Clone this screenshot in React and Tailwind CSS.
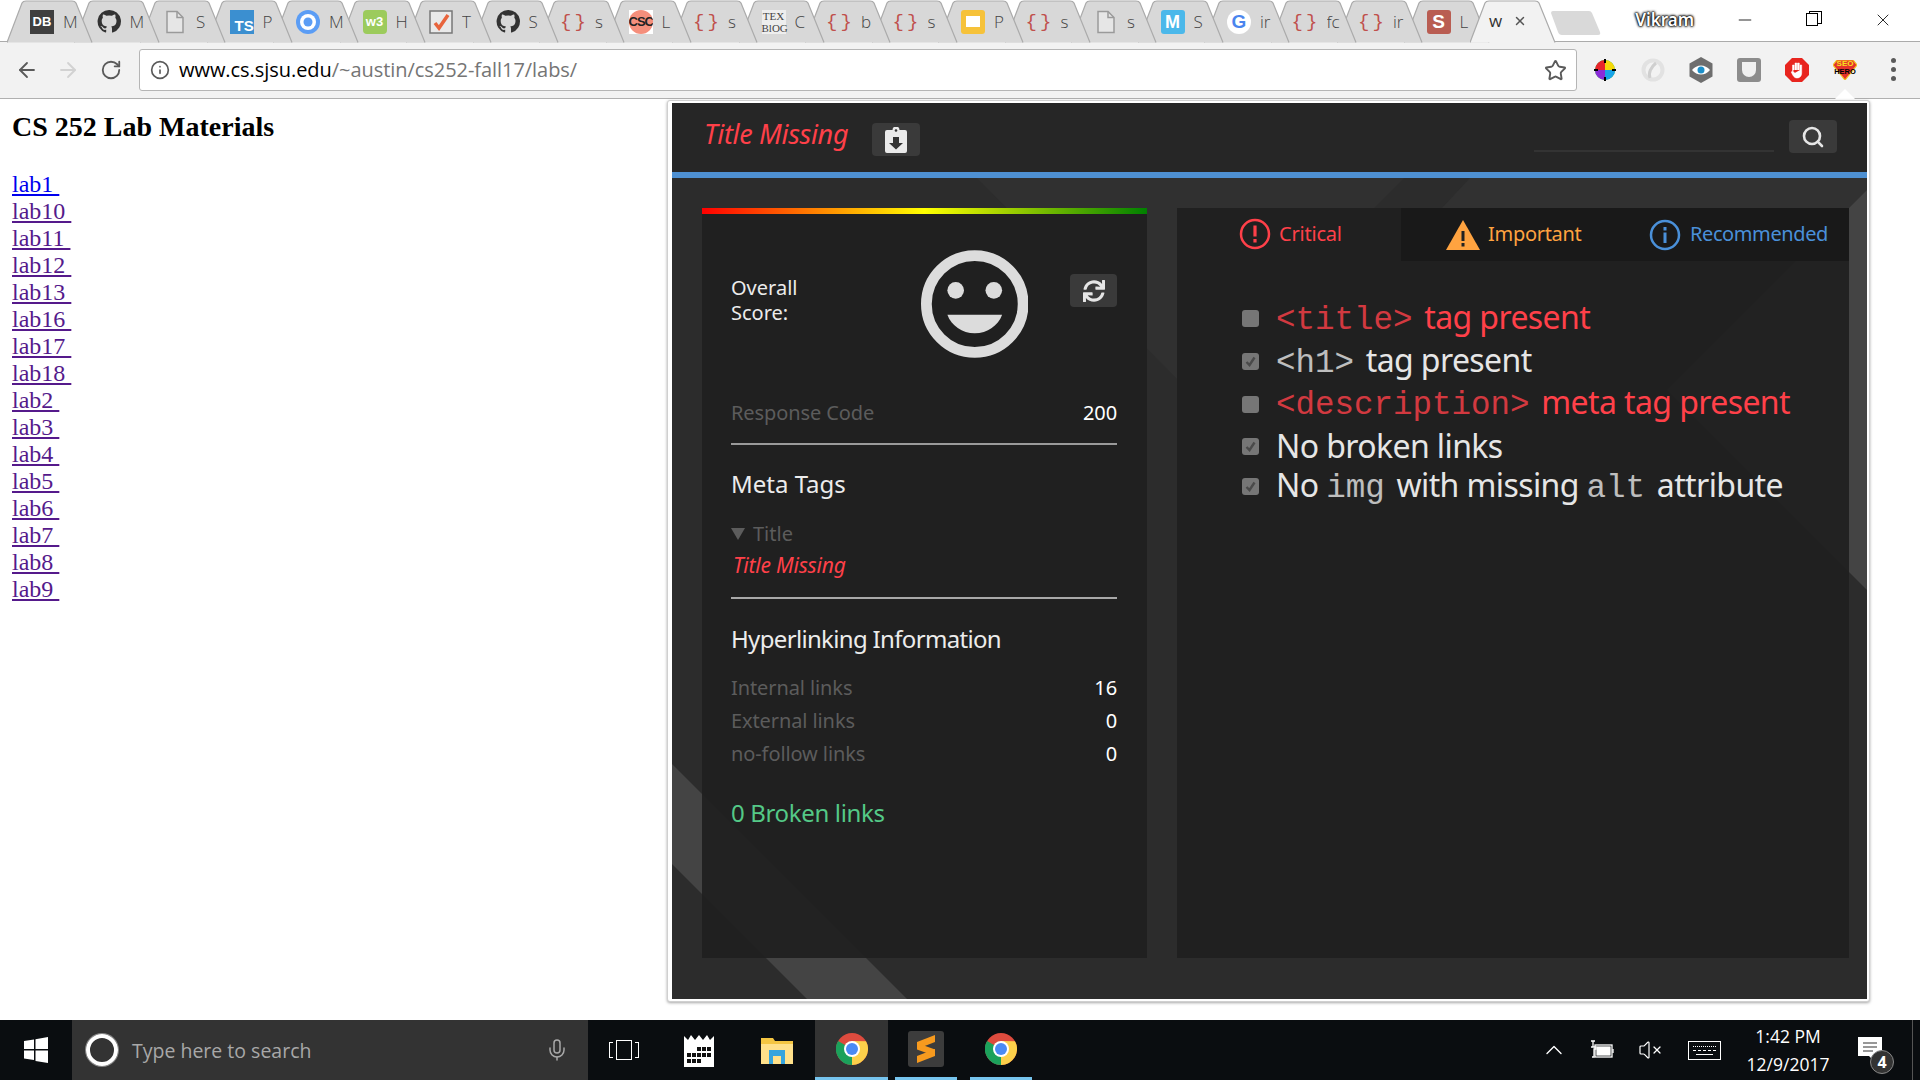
import React from "react";
import { ArrowLeft, ArrowRight, RotateCw, Info, Star, X, Minus, Search, ChevronUp, Mic, VolumeX } from "lucide-react";
import { FaSync } from "react-icons/fa";

const TABS = [
  ["db", "M"], ["gh", "M"], ["doc", "S"], ["ts", "P"], ["ring", "M"], ["w3", "H"], ["check", "T"], ["gh", "S"],
  ["br", "s"], ["csc", "L"], ["br", "s"], ["tex", "C"], ["br", "b"], ["br", "s"], ["slides", "P"], ["br", "s"],
  ["doc", "s"], ["m", "S"], ["g", "ir"], ["br", "fc"], ["br", "ir"], ["s", "L"],
];

function GitHub() {
  return (
    <svg width="25" height="25" viewBox="0 0 24 24" fill="#333">
      <path d="M12 .5A11.5 11.5 0 0 0 8.4 22.9c.6.1.8-.2.8-.6v-2c-3.2.7-3.9-1.5-3.9-1.5-.5-1.3-1.3-1.7-1.3-1.7-1-.7.1-.7.1-.7 1.2.1 1.8 1.200 1.800 1.200 1 1.800 2.700 1.300 3.400 1 .1-.8.400-1.300.700-1.600-2.600-.3-5.300-1.300-5.300-5.700 0-1.300.5-2.300 1.200-3.100-.1-.3-.5-1.500.1-3.100 0 0 1-.3 3.200 1.200a11 11 0 0 1 5.800 0c2.200-1.500 3.200-1.200 3.200-1.200.6 1.600.2 2.800.1 3.100.8.8 1.200 1.900 1.200 3.100 0 4.400-2.700 5.400-5.300 5.700.4.4.8 1.100.8 2.200v3.200c0 .3.200.7.800.6A11.500 11.500 0 0 0 12 .5Z" />
    </svg>
  );
}

function Favicon({ kind }) {
  if (kind === "db")
    return <div className="w-6 h-6 bg-[#3f3f3f] text-white text-[13px] leading-6 font-bold text-center font-['Liberation_Sans',sans-serif]">DB</div>;
  if (kind === "gh") return <GitHub />;
  if (kind === "doc")
    return (
      <svg width="24" height="24" viewBox="0 0 24 24" fill="none" stroke="#9a9a9a" strokeWidth="1.5">
        <path d="M4 1.500h10l6 6V22.500H4Z" fill="#e6e6e6" />
        <path d="M14 1.500v6h6" />
      </svg>
    );
  if (kind === "ts")
    return <div className="w-6 h-6 bg-[#3b8fd0] text-white text-[15px] leading-[17px] font-bold pt-[7px] pl-[5px] font-['Liberation_Sans',sans-serif]">TS</div>;
  if (kind === "ring")
    return (
      <svg width="24" height="24" viewBox="0 0 24 24">
        <circle cx="12" cy="12" r="12" fill="#5b9df5" />
        <circle cx="12" cy="12" r="8" fill="#fff" />
        <circle cx="12" cy="12" r="4.500" fill="#5b9df5" />
      </svg>
    );
  if (kind === "w3")
    return <div className="w-6 h-6 rounded-sm bg-[#9ccb5c] text-white text-[13px] leading-6 font-bold text-center font-['Liberation_Sans',sans-serif]">w3</div>;
  if (kind === "check")
    return (
      <svg width="24" height="24" viewBox="0 0 24 24" fill="none">
        <rect x="1" y="1" width="22" height="22" fill="#e9e9e9" stroke="#777" strokeWidth="1.500" />
        <path d="M6 13l4 5 9-13" stroke="#e8643c" strokeWidth="3.500" />
      </svg>
    );
  if (kind === "br")
    return <div className="w-7 text-[#c0504d] text-[19px] leading-6 text-center tracking-[3px] font-['Liberation_Mono',monospace]">{"{}"}</div>;
  if (kind === "csc")
    return (
      <div className="w-6 h-6 bg-white flex items-center justify-center">
        <div className="w-6 h-6 rounded-full bg-[#f58f7c] text-[#222] text-[13px] leading-6 font-bold text-center overflow-hidden tracking-[-1px] font-['Liberation_Sans',sans-serif]">CSC</div>
      </div>
    );
  if (kind === "tex")
    return <div className="w-6 h-6 text-[#444] bg-[#eee] text-[11px] leading-[12px] text-center font-['Liberation_Serif',serif]">TEX<br />BlOG</div>;
  if (kind === "slides")
    return (
      <div className="w-6 h-6 rounded-[3px] bg-[#f6c23a] flex items-center justify-center">
        <div className="w-[14px] h-[11px] bg-white" />
      </div>
    );
  if (kind === "m")
    return <div className="w-6 h-6 rounded-[3px] bg-[#4bb8ea] text-white text-[18px] leading-6 font-bold text-center font-['Liberation_Sans',sans-serif]">M</div>;
  if (kind === "g")
    return <div className="w-6 h-6 rounded-full bg-white text-[#4a85ee] text-[19px] leading-6 font-bold text-center font-['Liberation_Sans',sans-serif]">G</div>;
  if (kind === "s")
    return <div className="w-6 h-6 rounded-[3px] bg-[#b95d52] text-white text-[19px] leading-6 font-bold text-center font-['Liberation_Sans',sans-serif]">S</div>;
  return null;
}

function TabShape({ fill, stroke }) {
  return (
    <svg className="absolute left-0 top-0" width="86" height="43" viewBox="0 0 86 43">
      <path d="M0 42.500 L15 3 Q16 1 19 1 L65 1 Q68 1 69 3 L85 42.500 Z" fill={fill} />
      <path d="M0 42.500 L15 3 Q16 1 19 1 L65 1 Q68 1 69 3 L85 42.500" fill="none" stroke={stroke} strokeWidth="1.200" />
    </svg>
  );
}

function TabStrip() {
  return (
    <div className="h-[42px] flex bg-white border-b border-[#ababab] relative font-['Open_Sans',sans-serif]">
      <div className="flex pl-[7px]">
        {TABS.map(([kind, label], i) => (
          <div key={i} className="relative w-[66.5px] h-[42px] shrink-0" style={{ zIndex: 40 - i }}>
            <TabShape fill="#d8d8d8" stroke="#ababab" />
            <div className="relative h-[42px] w-[70px] pl-[23px] pt-[1px] flex items-center gap-[9px] overflow-hidden">
              <div className="shrink-0 w-6 flex justify-center"><Favicon kind={kind} /></div>
              <span className="w-[14px] shrink-0 overflow-hidden text-[17px] text-[#444] font-light">{label}</span>
            </div>
          </div>
        ))}
        <div className="relative w-[86px] h-[43px] shrink-0 z-50">
          <TabShape fill="#f2f2f2" stroke="#ababab" />
          <div className="relative h-[42px] pl-[19px] flex items-center gap-[11px]">
            <span className="text-[17px] text-[#333]">w</span>
            <X size={14} strokeWidth={2.500} className="text-[#555]" />
          </div>
        </div>
        <svg width="52" height="26" viewBox="0 0 52 26" className="-ml-[6px] mt-[10px] shrink-0">
          <path d="M1 3 Q1 1 3 1 H39 Q41 1 42 3 L50 22 Q51 25 48 25 H12 Q9 25 8 22 Z" fill="#d9d9d9" />
        </svg>
      </div>
      <div className="ml-auto flex items-center h-[42px] pr-[3px]">
        <span className="text-[17px] font-semibold text-white mr-[16px] mt-[-3px] font-['Noto_Sans',sans-serif] [text-shadow:0_0_1px_#000,0_0_2px_#000,0_0_3px_#000,0_0_3px_#000]">Vikram</span>
        <div className="w-[69px] flex justify-center mt-[-2px]"><Minus size={20} strokeWidth={1} className="text-black" /></div>
        <div className="w-[69px] flex justify-center mt-[-2px]">
          <div className="relative w-[15px] h-[15px]">
            <div className="absolute left-[3px] -top-[2px] w-[13px] h-[13px] border border-black" />
            <div className="absolute left-0 top-0 w-[12px] h-[13px] border border-black bg-white" />
          </div>
        </div>
        <div className="w-[69px] flex justify-center mt-[-2px]"><X size={20} strokeWidth={1} className="text-black" /></div>
      </div>
    </div>
  );
}

function Ext({ children }) {
  return <div className="w-[48px] h-[48px] flex items-center justify-center">{children}</div>;
}

function Toolbar() {
  return (
    <div className="h-[57px] bg-[#f2f2f2] border-b border-[#b0b0b0] flex items-center relative">
      <div className="w-[48px] pl-[6px] flex justify-center"><ArrowLeft size={24} strokeWidth={1.800} className="text-[#5a5a5a]" /></div>
      <div className="w-[40px] flex justify-center"><ArrowRight size={24} strokeWidth={1.800} className="text-[#d2d2d2]" /></div>
      <div className="w-[46px] flex justify-center"><RotateCw size={22} strokeWidth={2} className="text-[#5a5a5a]" /></div>
      <div className="ml-[5px] w-[1438px] h-[42px] bg-white rounded-[3px] border border-[#b5b5b5] flex items-center pl-[10px] pr-[9px]">
        <Info size={20} strokeWidth={2} className="text-[#5a5a5a] shrink-0" />
        <span className="ml-[9px] text-[20px] text-black font-['Open_Sans',sans-serif] tracking-[-0.05px]">www.cs.sjsu.edu<span className="text-[#757575]">/~austin/cs252-fall17/labs/</span></span>
        <Star size={23} strokeWidth={2} className="ml-auto text-[#5a5a5a]" />
      </div>
      <div className="ml-[4px] flex -mt-[1px]">
        <Ext>
          <svg width="22" height="22" viewBox="0 0 22 22">
            <circle cx="11" cy="11" r="10" fill="#1fb141" />
            <path d="M11 11V1a10 10 0 0 1 10 10Z" fill="#f5d90a" />
            <path d="M11 11h10a10 10 0 0 1-10 10Z" fill="#18a4e8" />
            <path d="M11 11v10a10 10 0 0 1-10-10Z" fill="#8b2bd8" />
            <path d="M11 11H1a10 10 0 0 1 10-10Z" fill="#e8252b" />
            <path d="M11 0v4M11 18v4M0 11h4M18 11h4" stroke="#000" strokeWidth="2" />
          </svg>
        </Ext>
        <Ext>
          <svg width="24" height="24" viewBox="0 0 24 24" fill="none">
            <circle cx="12" cy="12" r="9.500" stroke="#e2e2e2" strokeWidth="4" />
            <path d="M9 20c-2-5 1-11 6-15" stroke="#cfcfcf" strokeWidth="3" />
          </svg>
        </Ext>
        <Ext>
          <svg width="26" height="26" viewBox="0 0 26 26">
            <path d="M13 0l11.500 6.500v13L13 26 1.500 19.500v-13Z" fill="#6e6e6e" />
            <path d="M4 13c5-6 13-6 18 0-5 6-13 6-18 0Z" fill="#fff" />
            <circle cx="13" cy="13" r="3.500" fill="#1d8fc9" />
          </svg>
        </Ext>
        <Ext>
          <div className="w-6 h-6 rounded-[3px] bg-[#8c8c8c] flex items-center justify-center">
            <div className="w-[14px] h-[15px] bg-[#f0f0f0] rounded-b-full rounded-t-[4px]" />
          </div>
        </Ext>
        <Ext>
          <svg width="24" height="24" viewBox="0 0 24 24">
            <path d="M7 0h10l7 7v10l-7 7H7l-7-7V7Z" fill="#e8251f" />
            <path d="M7.500 13V7h1.700v5M10 12V5h1.800v7M12.500 12V5h1.800v7M15 12V7h1.700v8c0 3-2 5-4.500 5-3 0-4-2-6-6l1.500-1 2 2" fill="#fff" stroke="#fff" strokeWidth=".5" />
          </svg>
        </Ext>
        <Ext>
          <div className="relative w-[24px] h-[20px]">
            <svg width="24" height="20" viewBox="0 0 24 20" className="absolute left-0 top-0">
              <path d="M4 0h16l4 5-12 15L0 5Z" fill="#e4322b" stroke="#f6c21c" strokeWidth="1.200" />
            </svg>
            <div className="absolute left-0 right-0 top-0 text-center text-[8px] leading-[8px] font-bold text-[#f6e21c] font-['Liberation_Sans',sans-serif]">SEO</div>
            <div className="absolute left-0 right-0 top-[8px] text-center text-[7.5px] leading-[8px] font-bold text-black font-['Liberation_Sans',sans-serif]">HERO</div>
          </div>
        </Ext>
        <Ext>
          <div className="flex flex-col gap-[4px]">
            <div className="w-[5px] h-[5px] rounded-full bg-[#5a5a5a]" />
            <div className="w-[5px] h-[5px] rounded-full bg-[#5a5a5a]" />
            <div className="w-[5px] h-[5px] rounded-full bg-[#5a5a5a]" />
          </div>
        </Ext>
      </div>
      <svg width="20" height="10" viewBox="0 0 20 10" className="absolute left-[1835px] top-[47px]">
        <path d="M0 10L10 0l10 10Z" fill="#fff" />
      </svg>
    </div>
  );
}

const LINKS = ["lab1", "lab10", "lab11", "lab12", "lab13", "lab16", "lab17", "lab18", "lab2", "lab3", "lab4", "lab5", "lab6", "lab7", "lab8", "lab9"];

function PageContent() {
  return (
    <div className="pl-[12px] pt-[13px] font-['Liberation_Serif',serif] text-black">
      <h2 className="text-[28px] leading-[30px] font-bold">CS 252 Lab Materials</h2>
      <ul className="mt-[29px]">
        {LINKS.map((l, i) => (
          <li key={l} className="h-[27px] leading-[27px] text-[24px]">
            <a className={i === 0 ? "underline whitespace-pre text-[#0000ee]" : "underline whitespace-pre text-[#551a8b]"}>{l + " "}</a>
          </li>
        ))}
      </ul>
    </div>
  );
}

function Row({ label, value, cls }) {
  return (
    <div className={"flex justify-between items-center text-[20px] tracking-[-0.1px] " + (cls || "h-[33px]")}>
      <span className="text-[#5c5c5c]">{label}</span>
      <span className="text-white">{value}</span>
    </div>
  );
}

function Smiley() {
  return (
    <svg width="110" height="110" viewBox="0 0 110 110">
      <circle cx="55" cy="55" r="49.500" fill="none" stroke="#dcdcdc" strokeWidth="11" />
      <circle cx="35.500" cy="41" r="8.500" fill="#dcdcdc" />
      <circle cx="74.500" cy="41" r="8.500" fill="#dcdcdc" />
      <path d="M27 66h56c-4 11-15 19-28 19S31 77 27 66Z" fill="#dcdcdc" />
    </svg>
  );
}

function LeftCard() {
  return (
    <div className="w-[445px] h-[750px] bg-[#1f1f1f]/90 relative text-[#e6e6e6]">
      <div className="h-[6px] bg-[linear-gradient(to_right,#ff0000,#ffff00_50%,#008000)]" />
      <div className="pl-[29px] pr-[30px]">
        <div className="flex items-start mt-[35px]">
          <div className="w-[194px] mt-[26px] text-[20px] leading-[25px] text-[#ececec]">Overall<br />Score:</div>
          <Smiley />
          <button className="ml-[42px] mt-[25px] w-[48px] h-[33px] rounded-[4px] bg-[#3a3a3a] flex items-center justify-center">
            <FaSync size={22} className="text-[#e6e6e6]" />
          </button>
        </div>
        <Row label="Response Code" value="200" cls="mt-[37px] h-[33px]" />
        <div className="mt-[14px] h-[2px] bg-[#9a9a9a]" />
        <div className="mt-[22px] text-[24px] leading-[34px] text-[#ececec]">Meta Tags</div>
        <div className="mt-[19px] h-[28px] flex items-center text-[20px] text-[#5c5c5c]">
          <svg width="14" height="12" viewBox="0 0 14 12" className="mr-[8px]"><path d="M0 0h14L7 12Z" fill="#5c5c5c" /></svg>
          Title
        </div>
        <div className="mt-[2px] ml-[2px] h-[30px] leading-[30px] italic text-[21px] tracking-[-0.2px] text-[#ff4049]">Title Missing</div>
        <div className="mt-[17px] h-[2px] bg-[#a8a8a8]" />
        <div className="mt-[23px] text-[24px] leading-[34px] tracking-[-0.67px] text-[#ececec]">Hyperlinking Information</div>
        <div className="mt-[15px]">
          <Row label="Internal links" value="16" />
          <Row label="External links" value="0" />
          <Row label="no-follow links" value="0" />
        </div>
        <div className="mt-[26px] text-[24px] leading-[34px] tracking-[-0.35px] text-[#54c987]">0 Broken links</div>
      </div>
    </div>
  );
}

function Check({ on }) {
  return (
    <span className="shrink-0 w-[17px] h-[17px] rounded-[3px] bg-[#767676] flex items-center justify-center mr-[17px]">
      {on ? (
        <svg width="13" height="13" viewBox="0 0 13 13" fill="none"><path d="M2.500 7l3 3 5-7.500" stroke="#4a4a4a" strokeWidth="2.400" /></svg>
      ) : null}
    </span>
  );
}

const Mono = ({ children }) => <span className="font-['Liberation_Mono',monospace] text-[32.5px] tracking-normal opacity-80 mr-[4px]">{children}</span>;

function Item({ on, red, children, cls }) {
  return (
    <li className={"flex items-center whitespace-pre text-[32px] leading-[38px] tracking-[-0.6px] " + (red ? "text-[#ff4049] " : "text-[#e6e6e6] ") + cls}>
      <Check on={on} />
      <span>{children}</span>
    </li>
  );
}

function RightCard() {
  return (
    <div className="w-[672px] h-[750px] bg-[#1f1f1f]/90">
      <div className="flex h-[53px] text-[20px]">
        <div className="w-[224px] flex items-center pl-[62px] gap-[8px] text-[#ff4049] tracking-[-0.2px] -mt-[1px]">
          <svg width="32" height="32" viewBox="0 0 32 32" fill="none" stroke="#ff4049" strokeWidth="2.500">
            <circle cx="16" cy="16" r="14" />
            <path d="M16 7.500v11M16 21v3.500" strokeWidth="3.200" />
          </svg>
          Critical
        </div>
        <div className="flex-1 bg-[#191919] flex items-center">
          <svg width="34" height="30" viewBox="0 0 34 30" className="ml-[45px]">
            <path d="M17 0l17 30H0Z" fill="#ffa340" />
            <path d="M15.500 11h3v10h-3ZM15.500 23h3v3.500h-3Z" fill="#222" />
          </svg>
          <span className="ml-[8px] w-[106px] text-[#ffa340] tracking-[-0.3px] -mt-[1px]">Important</span>
          <svg width="32" height="32" viewBox="0 0 32 32" fill="none" stroke="#4a90d9" strokeWidth="2.500" className="ml-[55px]">
            <circle cx="16" cy="16" r="14" />
            <path d="M16 13.500V24M16 8v3.500" strokeWidth="3" />
          </svg>
          <span className="ml-[9px] text-[#4a90d9] tracking-[-0.4px] -mt-[1px]">Recommended</span>
        </div>
      </div>
      <ul className="mt-[36px] pl-[65px]">
        <Item red cls="h-[43px]"><Mono>{"<title>"}</Mono> tag present</Item>
        <Item on cls="h-[43px]"><Mono>{"<h1>"}</Mono> tag present</Item>
        <Item red cls="h-[42px]"><Mono>{"<description>"}</Mono> meta tag present</Item>
        <Item on cls="h-[42px]">No broken links</Item>
        <Item on cls="h-[39px]">No <Mono>img</Mono> with missing <Mono>alt</Mono> attribute</Item>
      </ul>
    </div>
  );
}

function Panel() {
  return (
    <div className="absolute left-[667px] top-[1px] w-[1203px] h-[902px] bg-white rounded-[3px] border border-[#d0d0d0] shadow-[0_1px_3px_rgba(0,0,0,0.35)] pl-[4px] pr-[2px] pt-[2px] pb-[2px] font-['Noto_Sans',sans-serif]">
      <div className="relative w-[1195px] h-[896px] bg-[#2c2c2c] overflow-hidden">
        <svg className="absolute left-0 top-0" width="1195" height="896" viewBox="0 0 1195 896">
          <polygon points="305,75 732,75 518,289" fill="#303030" />
          <polygon points="798,75 1195,75 1195,87 995,287 770,105" fill="#313131" />
          <polygon points="0,661 235,896 135,896 0,761" fill="#444444" />
          <polygon points="1195,87 995,287 1195,487" fill="#444444" />
        </svg>
        <div className="relative h-[69px] bg-[#262626] flex items-center pl-[32px] pr-[30px]">
          <span className="italic text-[27px] text-[#ff4049] tracking-[-0.3px] -mt-[6px]">Title Missing</span>
          <button className="ml-[24px] w-[48px] h-[33px] mt-[4px] rounded-[4px] bg-[#3a3a3a] flex items-center justify-center">
            <svg width="24" height="26" viewBox="0 0 24 26">
              <path d="M3 3h5.500a3.500 3.500 0 0 1 7 0H21a2 2 0 0 1 2 2v19a2 2 0 0 1-2 2H3a2 2 0 0 1-2-2V5a2 2 0 0 1 2-2Z" fill="#eaeaea" />
              <path d="M9 10h6v6h4l-7 6.500L5 16h4Z" fill="#333" />
              <circle cx="12" cy="3.500" r="1.300" fill="#333" />
            </svg>
          </button>
          <div className="ml-auto w-[240px] h-[2px] bg-[#333] mt-[26px] mr-[15px]" />
          <button className="w-[48px] h-[33px] rounded-[4px] bg-[#3a3a3a] flex items-center justify-center mt-[-2px]">
            <Search size={24} strokeWidth={2.600} className="text-[#e6e6e6]" />
          </button>
        </div>
        <div className="relative h-[6px] bg-[#4e90d2]" />
        <div className="relative flex pl-[30px] pt-[30px] gap-[30px]">
          <LeftCard />
          <RightCard />
        </div>
      </div>
    </div>
  );
}

function ChromeIcon() {
  return (
    <svg width="32" height="32" viewBox="0 0 32 32">
      <circle cx="16" cy="16" r="16" fill="#dd4b3e" />
      <path d="M2.100 8 A16 16 0 0 0 16 32 L23 20 L16 16Z" fill="#1ba15b" />
      <path d="M16 32 A16 16 0 0 0 30 8.200 L16 8 L16 16Z" fill="#fcd04a" />
      <circle cx="16" cy="16" r="8" fill="#fff" />
      <circle cx="16" cy="16" r="6" fill="#4a8af4" />
    </svg>
  );
}

function Taskbar() {
  return (
    <div className="h-[60px] bg-[#0a0d10] flex items-stretch text-white font-['Open_Sans',sans-serif]">
      <div className="w-[72px] flex items-center justify-center">
        <svg width="26" height="26" viewBox="0 0 26 26" fill="#fff">
          <path d="M1 4l10-1.500V12H1ZM12.500 2.300L25 0v12H12.500ZM1 13.500h10V23L1 21.500ZM12.500 13.500H25V26l-12.500-2Z" />
        </svg>
      </div>
      <div className="w-[516px] bg-[#333333] flex items-center pl-[14px] pr-[19px]">
        <div className="w-[32px] h-[32px] rounded-full border-[4px] border-white shadow-[0_0_0_1px_#888]" />
        <span className="ml-[14px] text-[#a8a8a8] text-[19.500px] mt-[1px]">Type here to search</span>
        <Mic size={24} strokeWidth={1.500} className="ml-auto text-[#a8a8a8]" />
      </div>
      <div className="w-[72px] flex items-center justify-center">
        <div className="relative w-[30px] h-[20px]">
          <div className="absolute left-[7px] top-0 w-[16px] h-[20px] border border-white" />
          <div className="absolute left-0 top-[2px] w-[4px] h-[16px] border-l border-t border-b border-white" />
          <div className="absolute right-0 top-[2px] w-[4px] h-[16px] border-r border-t border-b border-white" />
        </div>
      </div>
      <div className="w-[78px] flex items-center justify-center">
        <svg width="32" height="34" viewBox="0 0 32 34">
          <path d="M1 3l4 4 3-5 4 5 4-5 4 5 4-5 3 5 4-4v31H1Z" fill="#fff" />
          <g fill="#111">
            <rect x="14" y="14" width="4" height="4" /><rect x="19" y="14" width="4" height="4" /><rect x="24" y="14" width="4" height="4" />
            <rect x="4" y="20" width="4" height="4" /><rect x="9" y="20" width="4" height="4" /><rect x="14" y="20" width="4" height="4" /><rect x="19" y="20" width="4" height="4" /><rect x="24" y="20" width="4" height="4" />
            <rect x="4" y="26" width="4" height="4" /><rect x="9" y="26" width="4" height="4" /><rect x="14" y="26" width="4" height="4" />
          </g>
        </svg>
      </div>
      <div className="w-[77px] flex items-center justify-center">
        <svg width="32" height="28" viewBox="0 0 32 28">
          <path d="M0 2h12l2 3h18v23H0Z" fill="#f4c542" />
          <rect x="0" y="8" width="32" height="20" fill="#ffe08a" />
          <path d="M8 14h16v14h-4v-8h-8v8H8Z" fill="#35a4de" />
        </svg>
      </div>
      <div className="w-[73px] bg-[#333] border-b-[3px] border-[#76c4ee] flex items-center justify-center"><ChromeIcon /></div>
      <div className="ml-[7px] w-[62px] border-b-[3px] border-[#76c4ee] flex items-center justify-center">
        <div className="w-[36px] h-[36px] rounded-[3px] bg-[#3c3c3c] flex items-center justify-center">
          <svg width="20" height="30" viewBox="0 0 20 30" fill="#f79a1e">
            <path d="M19 1L1 8v7l18-7Z" />
            <path d="M1 9l18 6.500v6.500L1 15.500Z" />
            <path d="M19 15L1 22v7l18-7Z" />
          </svg>
        </div>
      </div>
      <div className="ml-[13px] w-[62px] border-b-[3px] border-[#76c4ee] flex items-center justify-center"><ChromeIcon /></div>
      <div className="flex-1 flex items-center justify-end">
        <div className="w-[48px] flex justify-center"><ChevronUp size={28} strokeWidth={1.200} /></div>
        <div className="w-[48px] flex justify-center">
          <svg width="26" height="20" viewBox="0 0 26 20" fill="none" stroke="#fff" strokeWidth="1.300">
            <path d="M4 7V1M2 1h4M2 7h5v2H5v8H3" />
            <rect x="6" y="5" width="17" height="12" />
            <rect x="8" y="7" width="13" height="8" fill="#fff" />
            <path d="M24 9v4" />
          </svg>
        </div>
        <div className="w-[48px] flex justify-center"><VolumeX size={24} strokeWidth={1.200} /></div>
        <div className="w-[60px] flex justify-center">
          <div className="w-[33px] h-[19px] border border-white flex flex-col justify-center gap-[3px] px-[4px]">
            <div className="border-t border-dotted border-white" />
            <div className="border-t border-dashed border-white" />
            <div className="border-t border-white mx-[3px]" />
          </div>
        </div>
        <div className="w-[108px] text-center text-[17.500px] leading-[28px]">
          <div>1:42 PM</div>
          <div>12/9/2017</div>
        </div>
        <div className="w-[78px] h-full relative">
          <svg width="26" height="26" viewBox="0 0 26 26" className="absolute left-[16px] top-[17px]">
            <path d="M0 0h24v19h-6l-1 6-6-6H0Z" fill="#fff" />
            <path d="M5 6h14M5 10h14M5 14h10" stroke="#333" strokeWidth="1.200" />
          </svg>
          <div className="absolute left-[28px] top-[30px] w-[24px] h-[24px] rounded-full bg-[#333] border border-[#888] text-[16px] leading-[22px] font-bold text-center">4</div>
          <div className="absolute right-[7px] top-0 bottom-0 w-px bg-[#555]" />
        </div>
      </div>
    </div>
  );
}

export default function App() {
  return (
    <div className="w-[1920px] h-[1080px] flex flex-col overflow-hidden bg-white">
      <TabStrip />
      <Toolbar />
      <div className="relative flex-1 bg-white">
        <PageContent />
        <Panel />
      </div>
      <Taskbar />
    </div>
  );
}
